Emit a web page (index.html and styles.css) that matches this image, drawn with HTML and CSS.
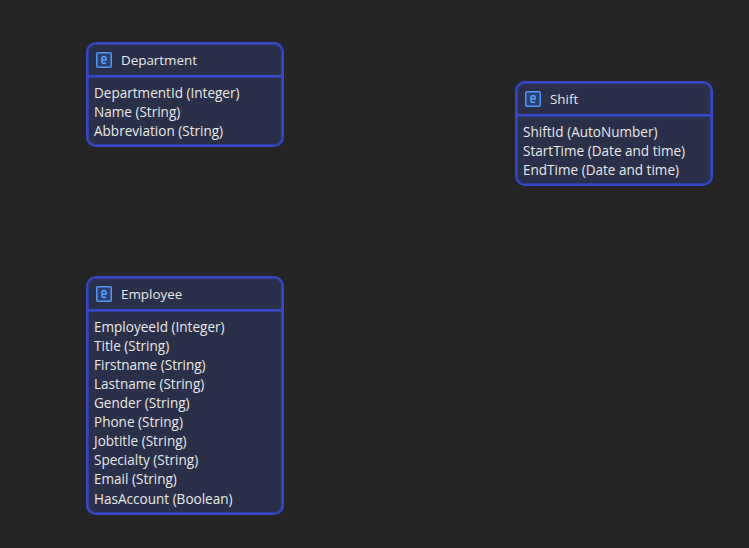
FILE: index.html
```html
<!DOCTYPE html>
<html lang="en">
<head>
<meta charset="utf-8">
<title>Entity diagram</title>
<link rel="stylesheet" href="styles.css">
</head>
<body>
<main class="canvas">
  <section class="entity entity-department">
    <header class="entity-head">
      <svg class="entity-icon" width="16" height="16" viewBox="0 0 16 16"><rect x="0.75" y="0.75" width="14.5" height="14.5" rx="1" class="icon-box"/><path d="M6 8h4V6a1.3 1.3 0 0 0-1.3-1.3H7.3A1.3 1.3 0 0 0 6 6v4a1.3 1.3 0 0 0 1.3 1.3H10" class="icon-e"/></svg>
      <span class="entity-name">Department</span>
    </header>
    <ul class="entity-fields">
      <li>DepartmentId (Integer)</li>
      <li>Name (String)</li>
      <li>Abbreviation (String)</li>
    </ul>
  </section>
  <section class="entity entity-shift">
    <header class="entity-head">
      <svg class="entity-icon" width="16" height="16" viewBox="0 0 16 16"><rect x="0.75" y="0.75" width="14.5" height="14.5" rx="1" class="icon-box"/><path d="M6 8h4V6a1.3 1.3 0 0 0-1.3-1.3H7.3A1.3 1.3 0 0 0 6 6v4a1.3 1.3 0 0 0 1.3 1.3H10" class="icon-e"/></svg>
      <span class="entity-name">Shift</span>
    </header>
    <ul class="entity-fields">
      <li>ShiftId (AutoNumber)</li>
      <li>StartTime (Date and time)</li>
      <li>EndTime (Date and time)</li>
    </ul>
  </section>
  <section class="entity entity-employee">
    <header class="entity-head">
      <svg class="entity-icon" width="16" height="16" viewBox="0 0 16 16"><rect x="0.75" y="0.75" width="14.5" height="14.5" rx="1" class="icon-box"/><path d="M6 8h4V6a1.3 1.3 0 0 0-1.3-1.3H7.3A1.3 1.3 0 0 0 6 6v4a1.3 1.3 0 0 0 1.3 1.3H10" class="icon-e"/></svg>
      <span class="entity-name">Employee</span>
    </header>
    <ul class="entity-fields">
      <li>EmployeeId (Integer)</li>
      <li>Title (String)</li>
      <li>Firstname (String)</li>
      <li>Lastname (String)</li>
      <li>Gender (String)</li>
      <li>Phone (String)</li>
      <li>Jobtitle (String)</li>
      <li>Specialty (String)</li>
      <li>Email (String)</li>
      <li>HasAccount (Boolean)</li>
    </ul>
  </section>
</main>
</body>
</html>
```
FILE: styles.css
```css
html, body {
  margin: 0;
  padding: 0;
  height: 100%;
  overflow: hidden;
  background: #252525;
}
.canvas {
  position: relative;
  width: 749px;
  height: 548px;
  font-family: "Open Sans", "Noto Sans", sans-serif;
  font-size: 13.55px;
  color: #e8e8e8;
}
.entity {
  position: absolute;
  width: 198px;
  box-sizing: border-box;
  background: #2a3049;
  border: 2px solid #3548cc;
  border-radius: 10px;
  box-shadow: inset 0 0 0 1px rgba(53, 72, 204, 0.6);
}
.entity-department { left: 86px; top: 42px; }
.entity-shift { left: 515px; top: 81px; }
.entity-employee { left: 86px; top: 276px; }
.entity-head {
  display: flex;
  align-items: center;
  gap: 9px;
  height: 31px;
  padding-left: 8px;
  border-bottom: 2px solid #3548cc;
  box-shadow: 0 1px 0 rgba(53, 72, 204, 0.6);
}
.entity-icon { flex: none; margin-top: 1px; }
.icon-box { fill: #2c3f73; stroke: #4f97f5; stroke-width: 1.5; }
.icon-e { fill: none; stroke: #55a3fa; stroke-width: 1.6; }
.entity-name { font-size: 13.4px; line-height: 19px; padding-top: 2px; }
.entity-fields {
  list-style: none;
  margin: 0;
  padding: 6.56px 5px 4.44px 6px;
}
.entity-fields li {
  height: 19.12px;
  line-height: 19.12px;
  white-space: nowrap;
}
```
